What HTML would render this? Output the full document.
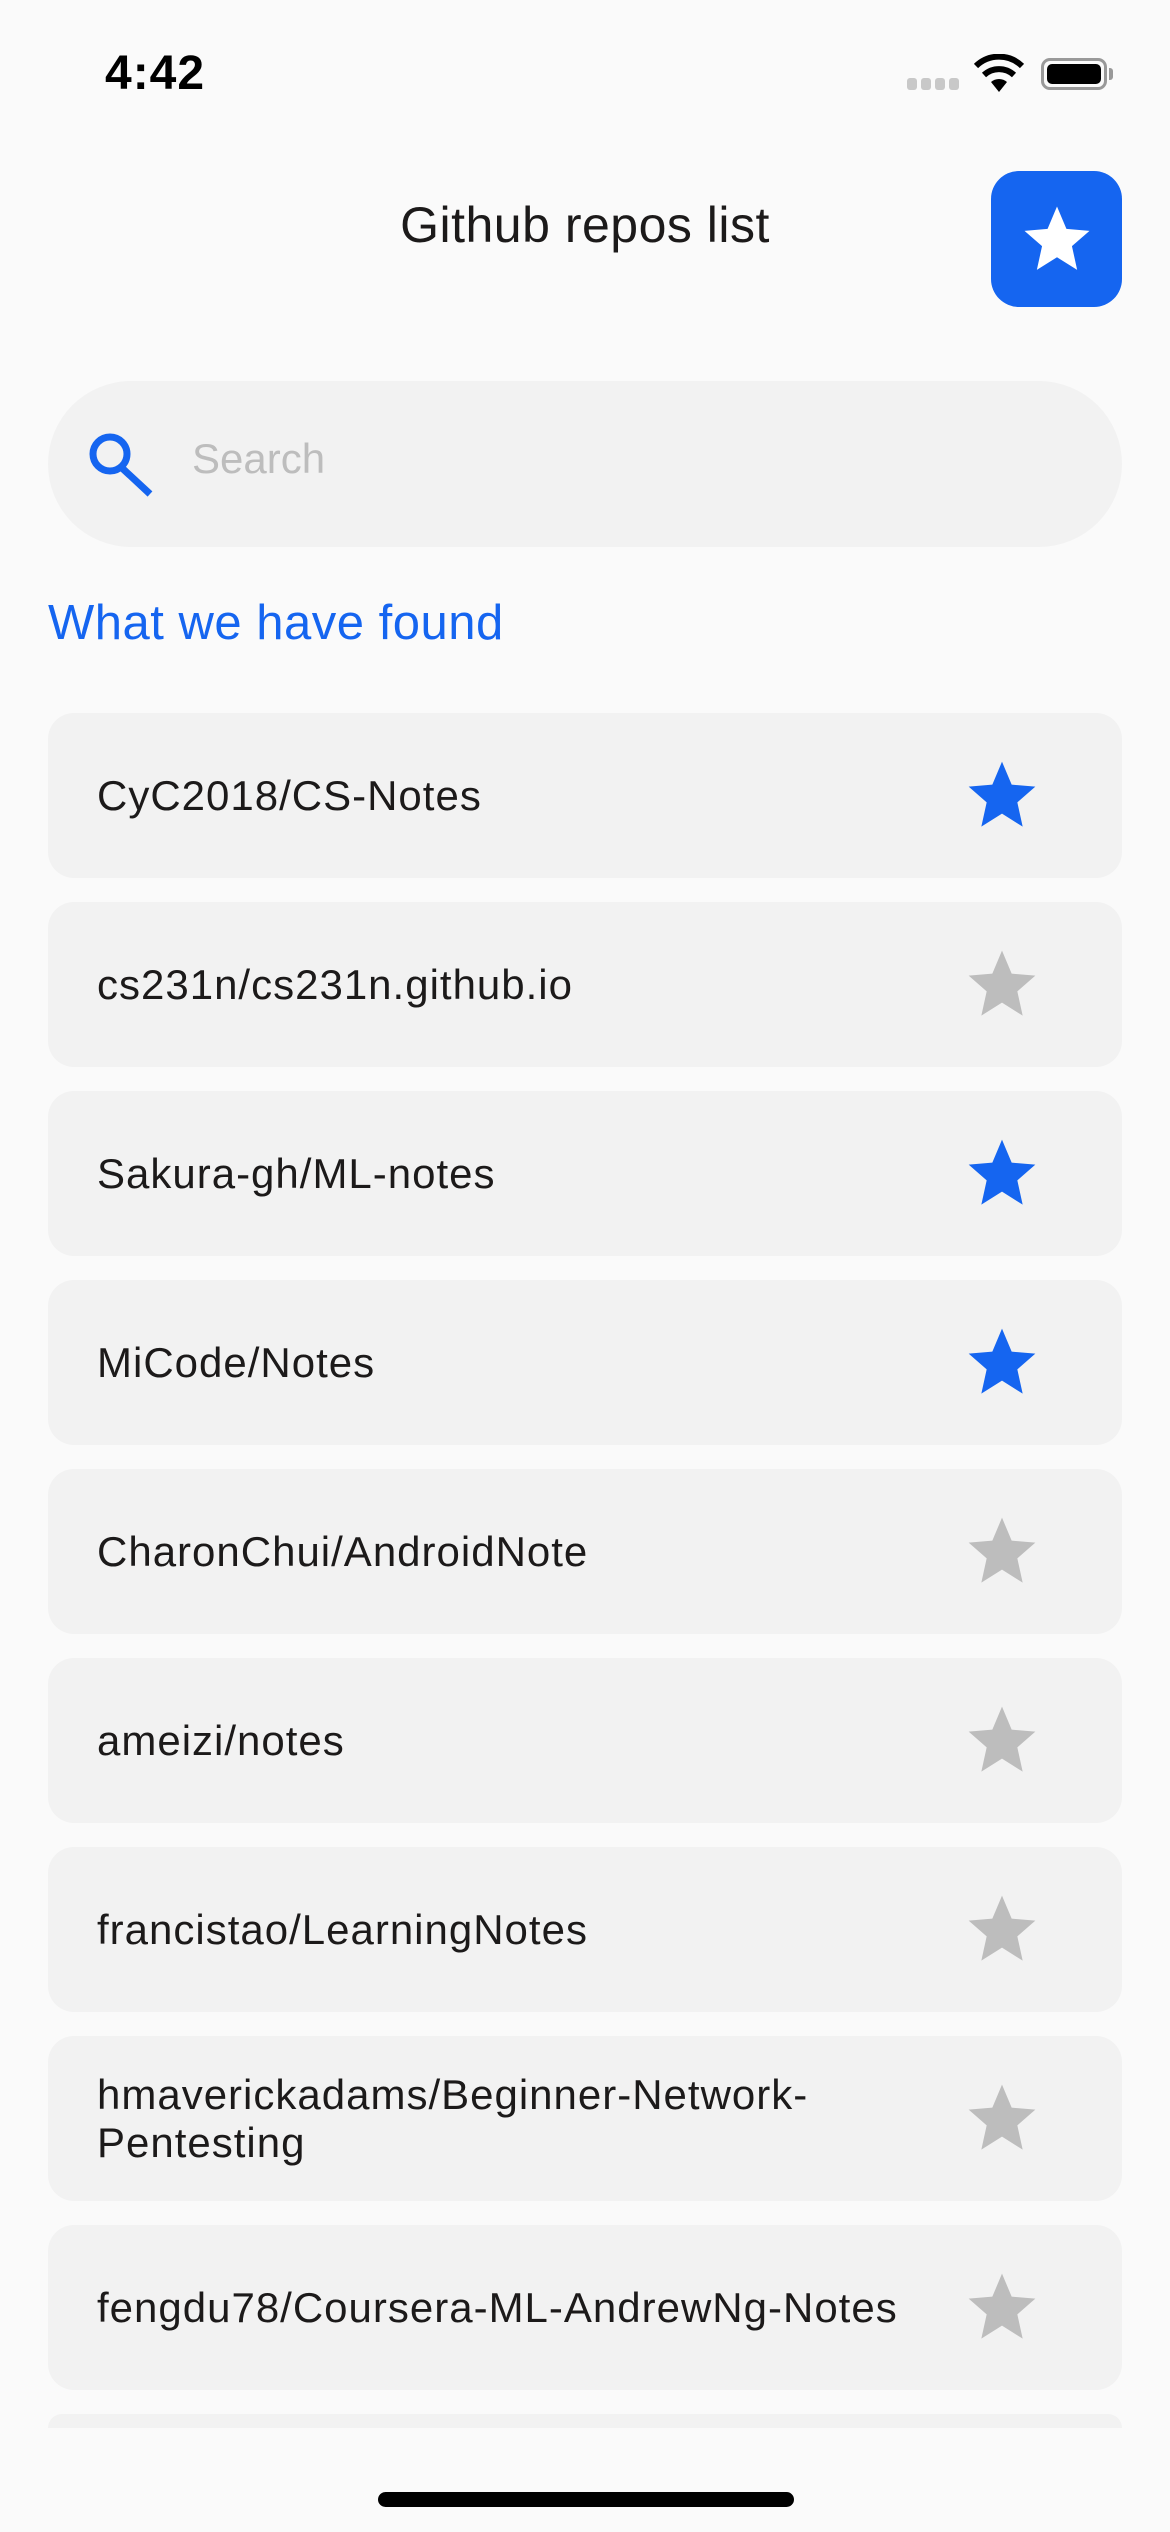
<!DOCTYPE html>
<html><head><meta charset="utf-8"><style>
*{margin:0;padding:0;box-sizing:border-box}
html,body{width:1170px;height:2532px;overflow:hidden}
body{background:#fafafa;font-family:"Liberation Sans",sans-serif;position:relative;color:#1c1a1a}
.abs{position:absolute}
.time{left:105px;top:46px;font-size:48px;font-weight:bold;color:#000;letter-spacing:1px}
.title{left:0;width:1170px;text-align:center;top:196px;font-size:50px;color:#1c1a1a;letter-spacing:0.5px}
.btn{left:991px;top:171px;width:131px;height:136px;border-radius:28px;background:#1565f0;display:flex;align-items:center;justify-content:center}
.search{left:48px;top:381px;width:1074px;height:166px;border-radius:83px;background:#f2f2f2}
.stext{left:192px;top:435px;font-size:42px;color:#bdbdbd}
.found{left:48px;top:595px;font-size:49px;color:#1565f0;letter-spacing:0.5px}
.card{left:48px;width:1074px;height:165px;border-radius:26px;background:#f2f2f2;overflow:hidden}
.card .t{position:absolute;left:49px;top:50%;transform:translateY(-50%);font-size:42px;letter-spacing:1px;line-height:48px;width:860px}
.card svg{position:absolute;left:914px;top:42px}
.home{left:378px;top:2492px;width:416px;height:15px;border-radius:8px;background:#000}
</style></head><body>
<div class="abs time">4:42</div>
<div class="abs" style="left:907px;top:78px;display:flex;gap:4px">
<div style="width:10px;height:12px;border-radius:3px;background:#c8c8c8"></div><div style="width:10px;height:12px;border-radius:3px;background:#c8c8c8"></div><div style="width:10px;height:12px;border-radius:3px;background:#c8c8c8"></div><div style="width:10px;height:12px;border-radius:3px;background:#c8c8c8"></div></div>
<svg class="abs" style="left:973px;top:54px" width="52" height="38" viewBox="0 0 52 38"><path d="M26 38 L18 28 A12 12 0 0 1 34 28 Z" fill="#000"/><path d="M11 21 A22 22 0 0 1 41 21" stroke="#000" stroke-width="6" fill="none"/><path d="M3 12 A33 33 0 0 1 49 12" stroke="#000" stroke-width="6" fill="none"/></svg>
<div class="abs" style="left:1041px;top:58px;width:66px;height:32px;border:3px solid #999;border-radius:9px;padding:3px"><div style="width:100%;height:100%;background:#000;border-radius:5px"></div></div>
<div class="abs" style="left:1109px;top:68px;width:4px;height:12px;background:#999;border-radius:0 3px 3px 0"></div>
<div class="abs title">Github repos list</div>
<div class="abs btn"><svg width="78" height="78" viewBox="0 0 24 24"><path d="M12 2l2.9 6.9 7.1.6-5.4 4.7 1.6 7.3L12 17.6 5.8 21.5l1.6-7.3L2 9.5l7.1-.6z" fill="#fff"/></svg></div>
<div class="abs search"></div>
<svg class="abs" style="left:86px;top:430px" width="70" height="68" viewBox="0 0 70 68"><circle cx="24" cy="24" r="17" stroke="#1565f0" stroke-width="7" fill="none"/><path d="M36 38 L64 64" stroke="#1565f0" stroke-width="7"/></svg>
<div class="abs stext">Search</div>
<div class="abs found">What we have found</div>

<div class="abs card" style="top:713px"><div class="t">CyC2018/CS-Notes</div><svg width="80" height="80" viewBox="0 0 24 24"><path d="M12 2l2.9 6.9 7.1.6-5.4 4.7 1.6 7.3L12 17.6 5.8 21.5l1.6-7.3L2 9.5l7.1-.6z" fill="#1565f0"/></svg></div>
<div class="abs card" style="top:902px"><div class="t">cs231n/cs231n.github.io</div><svg width="80" height="80" viewBox="0 0 24 24"><path d="M12 2l2.9 6.9 7.1.6-5.4 4.7 1.6 7.3L12 17.6 5.8 21.5l1.6-7.3L2 9.5l7.1-.6z" fill="#bdbdbd"/></svg></div>
<div class="abs card" style="top:1091px"><div class="t">Sakura-gh/ML-notes</div><svg width="80" height="80" viewBox="0 0 24 24"><path d="M12 2l2.9 6.9 7.1.6-5.4 4.7 1.6 7.3L12 17.6 5.8 21.5l1.6-7.3L2 9.5l7.1-.6z" fill="#1565f0"/></svg></div>
<div class="abs card" style="top:1280px"><div class="t">MiCode/Notes</div><svg width="80" height="80" viewBox="0 0 24 24"><path d="M12 2l2.9 6.9 7.1.6-5.4 4.7 1.6 7.3L12 17.6 5.8 21.5l1.6-7.3L2 9.5l7.1-.6z" fill="#1565f0"/></svg></div>
<div class="abs card" style="top:1469px"><div class="t">CharonChui/AndroidNote</div><svg width="80" height="80" viewBox="0 0 24 24"><path d="M12 2l2.9 6.9 7.1.6-5.4 4.7 1.6 7.3L12 17.6 5.8 21.5l1.6-7.3L2 9.5l7.1-.6z" fill="#bdbdbd"/></svg></div>
<div class="abs card" style="top:1658px"><div class="t">ameizi/notes</div><svg width="80" height="80" viewBox="0 0 24 24"><path d="M12 2l2.9 6.9 7.1.6-5.4 4.7 1.6 7.3L12 17.6 5.8 21.5l1.6-7.3L2 9.5l7.1-.6z" fill="#bdbdbd"/></svg></div>
<div class="abs card" style="top:1847px"><div class="t">francistao/LearningNotes</div><svg width="80" height="80" viewBox="0 0 24 24"><path d="M12 2l2.9 6.9 7.1.6-5.4 4.7 1.6 7.3L12 17.6 5.8 21.5l1.6-7.3L2 9.5l7.1-.6z" fill="#bdbdbd"/></svg></div>
<div class="abs card" style="top:2036px"><div class="t">hmaverickadams/Beginner-Network-<br>Pentesting</div><svg width="80" height="80" viewBox="0 0 24 24"><path d="M12 2l2.9 6.9 7.1.6-5.4 4.7 1.6 7.3L12 17.6 5.8 21.5l1.6-7.3L2 9.5l7.1-.6z" fill="#bdbdbd"/></svg></div>
<div class="abs card" style="top:2225px"><div class="t">fengdu78/Coursera-ML-AndrewNg-Notes</div><svg width="80" height="80" viewBox="0 0 24 24"><path d="M12 2l2.9 6.9 7.1.6-5.4 4.7 1.6 7.3L12 17.6 5.8 21.5l1.6-7.3L2 9.5l7.1-.6z" fill="#bdbdbd"/></svg></div>
<div class="abs" style="left:48px;top:2414px;width:1074px;height:14px;border-radius:26px 26px 0 0;background:#f2f2f2"></div>
<div class="abs home"></div>
</body></html>
